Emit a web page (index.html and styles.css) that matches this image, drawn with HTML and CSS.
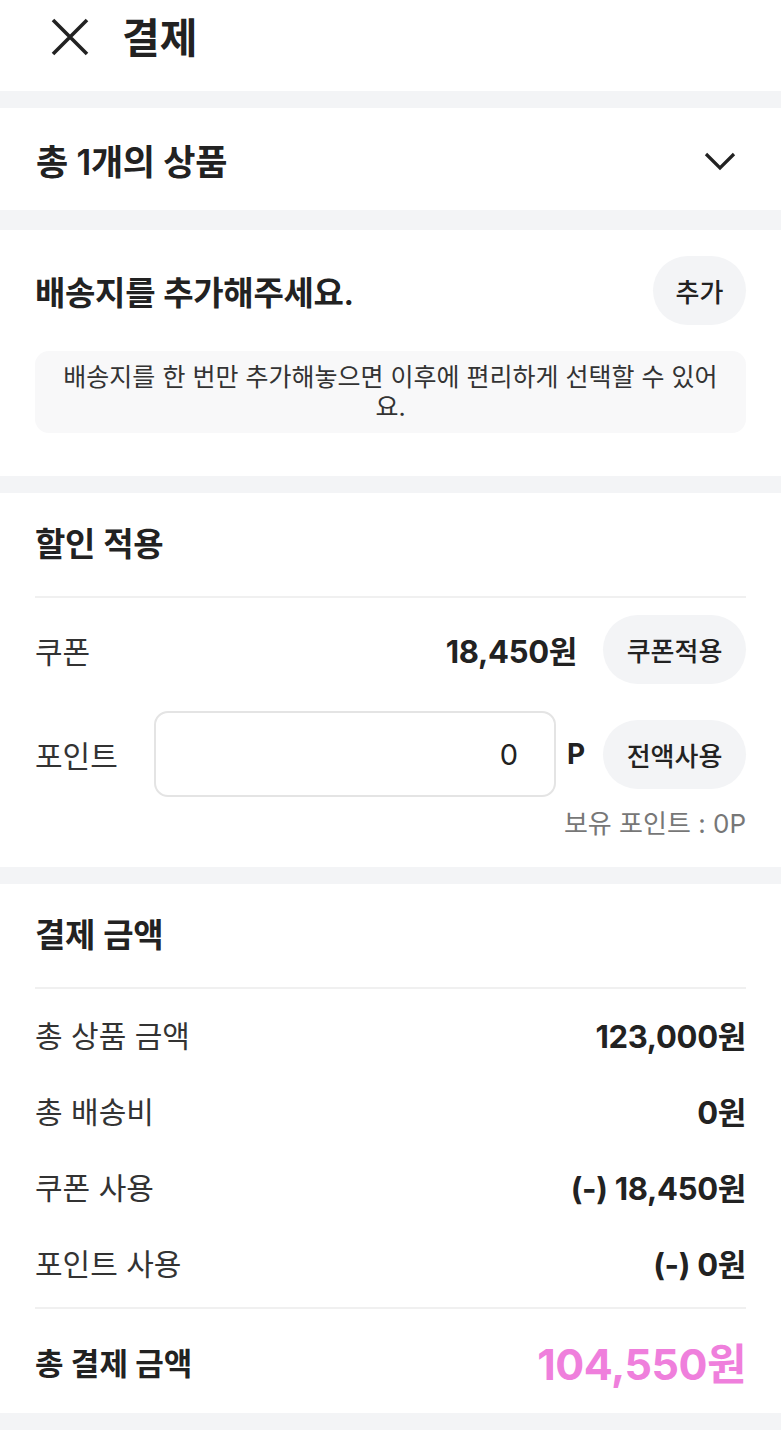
FILE: index.html
```html
<!DOCTYPE html>
<html lang="ko">
<head>
<meta charset="utf-8">
<title>결제</title>
<link rel="stylesheet" href="styles.css">
</head>
<body>
<header class="topBar">
  <svg class="closeIcon" width="38" height="38" viewBox="0 0 38 38">
    <path d="M2 2 L36 36 M36 2 L2 36" stroke="#222" stroke-width="3.6" fill="none"/>
  </svg>
  <h1 class="pageTitle">결제</h1>
</header>

<div class="gap"></div>

<!-- 상품 목록 접기 -->
<section class="productBar">
  <span class="productTitle">총 1개의 상품</span>
  <svg class="chevron" width="32" height="19" viewBox="0 0 32 19">
    <path d="M2 2 L16 16 L30 2" stroke="#222" stroke-width="3.2" fill="none"/>
  </svg>
</section>

<div class="gap gapWide"></div>

<!-- 배송지 -->
<section class="addressSection">
  <div class="addressHead">
    <h2 class="addressTitle">배송지를 추가해주세요.</h2>
    <button class="pillButton addButton">추가</button>
  </div>
  <div class="infoBox">배송지를 한 번만 추가해놓으면 이후에 편리하게 선택할 수 있어요.</div>
</section>

<div class="gap"></div>

<!-- 할인 -->
<section class="card">
  <h2 class="cardTitle">할인 적용</h2>
  <div class="divider"></div>
  <div class="couponRow">
    <span class="rowLabel">쿠폰</span>
    <span class="couponValue">18,450원</span>
    <button class="pillButton wideButton">쿠폰적용</button>
  </div>
  <div class="pointRow">
    <span class="rowLabel pointLabel">포인트</span>
    <input type="text" class="pointInput" value="0">
    <span class="pointUnit">P</span>
    <button class="pillButton wideButton">전액사용</button>
  </div>
  <div class="pointOwned">보유 포인트 : 0P</div>
</section>

<div class="gap"></div>

<!-- 결제 금액 -->
<section class="card">
  <h2 class="cardTitle">결제 금액</h2>
  <div class="divider"></div>
  <div class="sumList">
    <div class="sumRow"><span class="rowLabel">총 상품 금액</span><span class="sumValue">123,000원</span></div>
    <div class="sumRow"><span class="rowLabel">총 배송비</span><span class="sumValue">0원</span></div>
    <div class="sumRow"><span class="rowLabel">쿠폰 사용</span><span class="sumValue">(-) 18,450원</span></div>
    <div class="sumRow"><span class="rowLabel">포인트 사용</span><span class="sumValue">(-) 0원</span></div>
  </div>
  <div class="divider"></div>
  <div class="totalRow">
    <span class="totalLabel">총 결제 금액</span>
    <span class="totalValue">104,550원</span>
  </div>
</section>

<div class="gap"></div>
</body>
</html>
```

FILE: styles.css
```css
  body {
    margin: 0;
    background-color: #ffffff;
    font-family: Inter, "Noto Sans CJK KR", sans-serif;
    color: #222222;
  }
  h1, h2 {
    margin: 0;
  }
  button {
    font-family: inherit;
    border: none;
    cursor: pointer;
  }

  /* header */
  .topBar {
    height: 91px;
    display: flex;
    align-items: center;
    padding-left: 51px;
    box-sizing: border-box;
  }
  .closeIcon {
    margin-top: -17px;
  }
  .pageTitle {
    margin-left: 33px;
    margin-top: -21px;
    font-size: 41px;
    font-weight: 700;
  }

  .gap {
    height: 17px;
    background-color: #f3f4f6;
  }
  .gapWide {
    height: 20px;
  }

  /* product bar */
  .productBar {
    height: 102px;
    display: flex;
    align-items: center;
    justify-content: space-between;
    padding: 0 45px 0 36px;
  }
  .productTitle {
    font-size: 35px;
    font-weight: 600;
    letter-spacing: -0.3px;
    margin-top: 1px;
  }
  .chevron {
    margin-top: 4px;
  }

  /* address */
  .addressSection {
    padding: 26px 35px 43px 35px;
  }
  .addressHead {
    display: flex;
    align-items: center;
    justify-content: space-between;
  }
  .addressTitle {
    font-size: 33px;
    font-weight: 600;
    letter-spacing: -0.3px;
  }
  .pillButton {
    background-color: #f3f4f6;
    color: #222222;
    border-radius: 35px;
    font-size: 26px;
    font-weight: 500;
    height: 69px;
    padding: 0;
  }
  .addButton {
    width: 93px;
  }
  .infoBox {
    margin-top: 26px;
    background-color: #f8f8f9;
    border-radius: 14px;
    padding: 11px 20px;
    text-align: center;
    font-size: 25px;
    line-height: 30px;
    color: #333333;
  }

  /* cards */
  .card {
    padding: 0 35px;
  }
  .cardTitle {
    height: 103px;
    line-height: 103px;
    font-size: 33px;
    font-weight: 600;
    letter-spacing: -0.3px;
  }
  .divider {
    height: 2px;
    background-color: #f0f0f0;
  }
  .rowLabel {
    font-size: 30px;
    font-weight: 400;
    color: #333333;
  }
  .couponRow {
    display: flex;
    align-items: center;
    margin-top: 17px;
  }
  .couponValue {
    margin-left: auto;
    margin-right: 26px;
    font-size: 31px;
    font-weight: 700;
    letter-spacing: -0.3px;
  }
  .wideButton {
    width: 143px;
  }
  .pointRow {
    display: flex;
    align-items: center;
    margin-top: 27px;
  }
  .pointLabel {
    width: 119px;
  }
  .pointInput {
    width: 402px;
    height: 86px;
    box-sizing: border-box;
    border: 2px solid #e4e4e4;
    border-radius: 14px;
    text-align: right;
    padding-right: 36px;
    font-family: inherit;
    font-size: 29px;
    color: #222222;
  }
  .pointUnit {
    margin-left: 11px;
    margin-right: 18px;
    font-size: 28px;
    font-weight: 700;
  }
  .pointOwned {
    text-align: right;
    margin-top: 12px;
    padding-bottom: 28px;
    font-size: 26px;
    line-height: 30px;
    color: #777777;
  }

  .sumList {
    padding: 7px 0 7px 0;
  }
  .sumRow {
    height: 76px;
    display: flex;
    align-items: center;
    justify-content: space-between;
  }
  .sumValue {
    font-size: 31px;
    font-weight: 700;
    letter-spacing: -0.3px;
  }
  .totalRow {
    height: 104px;
    display: flex;
    align-items: center;
    justify-content: space-between;
  }
  .totalLabel {
    font-size: 31px;
    font-weight: 700;
  }
  .totalValue {
    font-size: 43px;
    font-weight: 700;
    color: #ef7fdc;
    letter-spacing: -0.5px;
  }
```
